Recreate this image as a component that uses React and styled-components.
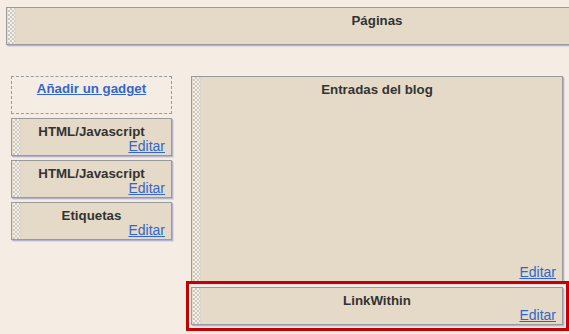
import React from "react";
import styled, { createGlobalStyle, css } from "styled-components";

const Global = createGlobalStyle`
  html, body { margin: 0; padding: 0; }
  body {
    background: #f5ede3;
    font-family: "Liberation Sans", Arial, sans-serif;
    color: #333;
    overflow: hidden;
  }
`;

const Page = styled.div`
  width: 569px;
  height: 334px;
  overflow: hidden;
  padding: 7px 0 0 6px;
  box-sizing: border-box;
`;

const grip = css`
  &::before {
    content: "";
    position: absolute;
    left: 1px;
    top: 0;
    bottom: 0;
    width: 7px;
    background-color: #f4f1ec;
    background-image:
      linear-gradient(45deg, #cdc7bd 25%, transparent 25%, transparent 75%, #cdc7bd 75%),
      linear-gradient(45deg, #cdc7bd 25%, transparent 25%, transparent 75%, #cdc7bd 75%);
    background-size: 4px 4px;
    background-position: 0 0, 2px 2px;
    border-right: 1px solid #ddd6ca;
  }
`;

const Widget = styled.div`
  position: relative;
  box-sizing: border-box;
  height: ${(p) => p.$h || 38}px;
  background: #e5dac8;
  border: 1px solid #9a9a9a;
  box-shadow: 1px 1px 0 #b4b4cc, 2px 2px 0 #dcd8e4;
  display: flex;
  flex-direction: column;
  justify-content: ${(p) => (p.$spread ? "space-between" : "flex-start")};
  padding: 6px 6px 2px 10px;
  ${grip}
`;

const TopBar = styled(Widget)`
  width: 742px;
`;

const Title = styled.div`
  font-weight: bold;
  font-size: 13.3px;
  line-height: 13px;
  text-align: center;
  color: #333;
  margin-left: -10px;
  margin-right: -6px;
`;

const EditLink = styled.a`
  align-self: flex-end;
  font-size: 14px;
  line-height: 16px;
  color: #3366cc;
  text-decoration: underline;
  cursor: pointer;
`;

const Columns = styled.div`
  display: flex;
  gap: 19px;
  margin-top: 31px;
  padding-left: 5px;
`;

const Sidebar = styled.div`
  width: 161px;
  display: flex;
  flex-direction: column;
  gap: 4px;
`;

const AddGadget = styled.div`
  box-sizing: border-box;
  height: 38px;
  border: 1px dashed #9a9a9a;
  text-align: center;
  padding-top: 2px;
`;

const AddLink = styled.a`
  font-weight: bold;
  font-size: 13.3px;
  line-height: 15px;
  color: #3366cc;
  text-decoration: underline;
  cursor: pointer;
`;

const Main = styled.div`
  width: 372px;
  display: flex;
  flex-direction: column;
  gap: 4px;
`;

const Selected = styled.div`
  position: relative;
  &::after {
    content: "";
    position: absolute;
    top: -6px;
    left: -5px;
    right: -6px;
    bottom: -6px;
    border: 3px solid #c40000;
    pointer-events: none;
  }
`;

function Gadget({ title, h, spread }) {
  return (
    <Widget $h={h} $spread={spread}>
      <Title>{title}</Title>
      <EditLink>Editar</EditLink>
    </Widget>
  );
}

export default function App() {
  return (
    <Page>
      <Global />
      <TopBar>
        <Title>Páginas</Title>
      </TopBar>
      <Columns>
        <Sidebar>
          <AddGadget>
            <AddLink>Añadir un gadget</AddLink>
          </AddGadget>
          <Gadget title="HTML/Javascript" />
          <Gadget title="HTML/Javascript" />
          <Gadget title="Etiquetas" />
        </Sidebar>
        <Main>
          <Gadget title="Entradas del blog" h={207} spread />
          <Selected>
            <Gadget title="LinkWithin" />
          </Selected>
        </Main>
      </Columns>
    </Page>
  );
}
